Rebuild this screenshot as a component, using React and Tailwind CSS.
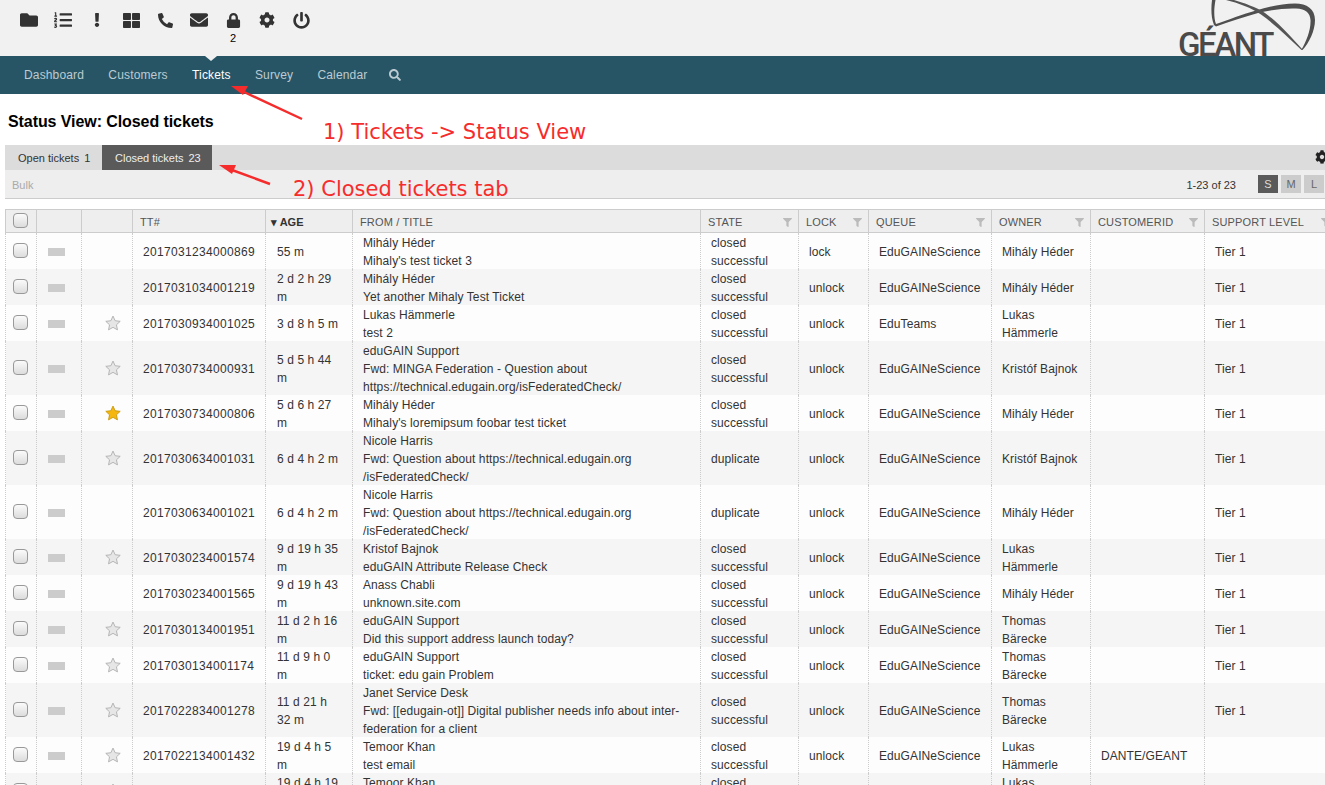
import React from "react";
import { FaFolder, FaListOl, FaExclamation, FaThLarge, FaPhoneAlt, FaEnvelope, FaLock, FaCog, FaPowerOff, FaSearch, FaFilter } from "react-icons/fa";

const topIcons = [
  [FaFolder, "text-[18px]"],
  [FaListOl, "text-[18px]"],
  [FaExclamation, "text-[14px]"],
  [FaThLarge, "text-[17px]"],
  [FaPhoneAlt, "text-[15px]"],
  [FaEnvelope, "text-[18px]"],
  [FaLock, "text-[15px]"],
  [FaCog, "text-[16px]"],
  [FaPowerOff, "text-[17px]"],
];

const cols = [31, 45, 51, 133, 87, 348, 98, 70, 123, 99, 114, 131];

const L = "Lukas\nHämmerle";
const T = "Thomas\nBärecke";
const CS = "closed\nsuccessful";
const rows = [
  { s: 0, id: "2017031234000869", age: "55 m", from: "Mihály Héder\nMihaly's test ticket 3", state: CS, lock: "lock", q: "EduGAINeScience", o: "Mihály Héder", c: "", t: "Tier 1" },
  { s: 0, id: "2017031034001219", age: "2 d 2 h 29\nm", from: "Mihály Héder\nYet another Mihaly Test Ticket", state: CS, lock: "unlock", q: "EduGAINeScience", o: "Mihály Héder", c: "", t: "Tier 1" },
  { s: 1, id: "2017030934001025", age: "3 d 8 h 5 m", from: "Lukas Hämmerle\ntest 2", state: CS, lock: "unlock", q: "EduTeams", o: L, c: "", t: "Tier 1" },
  { s: 1, id: "2017030734000931", age: "5 d 5 h 44\nm", from: "eduGAIN Support\nFwd: MINGA Federation - Question about\nhttps://technical.edugain.org/isFederatedCheck/", state: CS, lock: "unlock", q: "EduGAINeScience", o: "Kristóf Bajnok", c: "", t: "Tier 1" },
  { s: 2, id: "2017030734000806", age: "5 d 6 h 27\nm", from: "Mihály Héder\nMihaly's loremipsum foobar test ticket", state: CS, lock: "unlock", q: "EduGAINeScience", o: "Mihály Héder", c: "", t: "Tier 1" },
  { s: 1, id: "2017030634001031", age: "6 d 4 h 2 m", from: "Nicole Harris\nFwd: Question about https://technical.edugain.org\n/isFederatedCheck/", state: "duplicate", lock: "unlock", q: "EduGAINeScience", o: "Kristóf Bajnok", c: "", t: "Tier 1" },
  { s: 0, id: "2017030634001021", age: "6 d 4 h 2 m", from: "Nicole Harris\nFwd: Question about https://technical.edugain.org\n/isFederatedCheck/", state: "duplicate", lock: "unlock", q: "EduGAINeScience", o: "Mihály Héder", c: "", t: "Tier 1" },
  { s: 1, id: "2017030234001574", age: "9 d 19 h 35\nm", from: "Kristof Bajnok\neduGAIN Attribute Release Check", state: CS, lock: "unlock", q: "EduGAINeScience", o: L, c: "", t: "Tier 1" },
  { s: 0, id: "2017030234001565", age: "9 d 19 h 43\nm", from: "Anass Chabli\nunknown.site.com", state: CS, lock: "unlock", q: "EduGAINeScience", o: "Mihály Héder", c: "", t: "Tier 1" },
  { s: 1, id: "2017030134001951", age: "11 d 2 h 16\nm", from: "eduGAIN Support\nDid this support address launch today?", state: CS, lock: "unlock", q: "EduGAINeScience", o: T, c: "", t: "Tier 1" },
  { s: 1, id: "2017030134001174", age: "11 d 9 h 0\nm", from: "eduGAIN Support\nticket: edu gain Problem", state: CS, lock: "unlock", q: "EduGAINeScience", o: T, c: "", t: "Tier 1" },
  { s: 1, id: "2017022834001278", age: "11 d 21 h\n32 m", from: "Janet Service Desk\nFwd: [[edugain-ot]] Digital publisher needs info about inter-\nfederation for a client", state: CS, lock: "unlock", q: "EduGAINeScience", o: T, c: "", t: "Tier 1" },
  { s: 1, id: "2017022134001432", age: "19 d 4 h 5\nm", from: "Temoor Khan\ntest email", state: CS, lock: "unlock", q: "EduGAINeScience", o: L, c: "DANTE/GEANT", t: "" },
  { s: 1, id: "2017022134001421", age: "19 d 4 h 19\nm", from: "Temoor Khan\ntest email", state: CS, lock: "unlock", q: "EduGAINeScience", o: L, c: "DANTE/GEANT", t: "" },
];

const Lines = ({ text }) => (
  <div className="translate-y-px tracking-[0.09px]">
    {text.split("\n").map((l, i) => (
      <div key={i} className="whitespace-nowrap">{l}</div>
    ))}
  </div>
);

const Check = () => (
  <span className="block ml-[7px] -translate-y-px w-[15px] h-[15px] rounded-[4px] border border-[#999] bg-gradient-to-b from-[#fbfbfb] to-[#dcdcdc]" />
);

const Star = ({ on }) => (
  <svg width="16" height="16" viewBox="0 0 24 24" className="block">
    <path
      d="M12 1.6l3.2 7 7.6.9-5.6 5.2 1.5 7.6L12 18.5l-6.7 3.8 1.5-7.6L1.2 9.5l7.6-.9z"
      fill={on ? "#f4b60f" : "#e6e6e6"}
      stroke={on ? "#c99a10" : "#b0b0b0"}
      strokeWidth="1.4"
      strokeLinejoin="round"
    />
  </svg>
);

const th = "border-l border-[#ccc] h-[23px] p-0 font-normal text-left align-middle";
const Head = ({ children, filter }) => (
  <th className={th}>
    <div className="flex items-center justify-between pl-[7px] pr-[6px] text-[11px] text-[#555] tracking-[0.15px] translate-y-px">
      <span className="whitespace-nowrap">{children}</span>
      {filter && <FaFilter className="text-[9px] text-[#bbb]" />}
    </div>
  </th>
);

const td = "border-l border-dotted border-[#ccc] p-0 align-middle";

export default function App() {
  return (
    <div className="relative w-[1325px] h-[785px] overflow-hidden bg-white text-[12px] leading-[18px] text-[#333] font-['Liberation_Sans',Arial,sans-serif]">
      <header className="h-[56px] bg-[#f1f1f1] flex justify-between overflow-hidden">
        <div className="flex pl-[12px] pt-[11px]">
          {topIcons.map(([I, size], i) => (
            <div key={i} className="relative w-[34px] h-[18px] flex items-center justify-center text-[#333]">
              <I className={size} />
              {i === 6 && <span className="absolute top-[20px] left-0 right-0 text-center text-[11px] leading-[14px] text-black">2</span>}
            </div>
          ))}
        </div>
        <svg width="160" height="56" viewBox="1165 0 160 56" className="block shrink-0">
          <path d="M1212 0C1211 8 1211 18 1214 25L1216 26.5C1230 21.5 1245 16.5 1258 13C1270 10 1285 8 1296 8.5C1306 9 1310 13 1310.5 20C1311 30 1306 42 1301.5 49.5L1302.5 50C1309 43 1315 31 1315 20C1315 9 1307 3.5 1295 3.5C1282 3.5 1268 7 1256 10.5C1243 14 1228 20 1216 24C1213.5 17 1214 8 1215.5 0Z" fill="#4f4f4f" />
          <path d="M1226 0C1238 3 1252 8 1261 14.5C1275 24.5 1290 39 1301.5 50L1302.5 49.5C1292 38 1279 23 1265 13C1256 7 1244 3 1234 0Z" fill="#555555" />
          <text x="1178" y="56" fontFamily="Roboto, 'Liberation Sans', sans-serif" fontSize="33" fontWeight="500" letterSpacing="-2.4" fill="#4a4a4a">GÉANT</text>
        </svg>
      </header>

      <nav className="h-[38px] bg-[#285566] flex items-center pl-[24px] gap-[24.3px] text-[#bccbd1] tracking-[0.15px]">
        <span>Dashboard</span>
        <span>Customers</span>
        <span className="relative text-white">
          Tickets
          <span className="absolute top-[-10px] left-[13px] w-0 h-0 border-x-[6px] border-x-transparent border-t-[5px] border-t-[#f1f1f1]" />
        </span>
        <span>Survey</span>
        <span>Calendar</span>
        <FaSearch className="text-[12px] -ml-[3px]" />
      </nav>

      <h1 className="pt-[19px] ml-[8px] text-[16px] leading-[17px] font-bold text-black tracking-[-0.08px]">Status View: Closed tickets</h1>

      <div className="ml-[5px] mt-[15px] h-[25px] bg-[#dcdcdc] flex items-stretch text-[11px]">
        <div className="w-[97px] flex items-center pl-[13px] gap-[5px] text-[#333]"><span>Open tickets</span><span>1</span></div>
        <div className="w-[110px] flex items-center pl-[13px] gap-[5px] bg-[#5a5a5a] text-[#eee]"><span>Closed tickets</span><span>23</span></div>
        <div className="ml-auto flex items-center"><FaCog className="text-[14px] text-[#222] -mr-[4px] -translate-y-px" /></div>
      </div>

      <div className="ml-[5px] h-[29px] bg-[#eee] border-b border-[#ccc] flex items-center pl-[7px] text-[11px]">
        <span className="text-[#aaa] translate-y-px">Bulk</span>
        <span className="ml-auto text-[#333] translate-y-px">1-23 of 23</span>
        <div className="flex ml-[22px] gap-[3px] mr-[1px] text-[#666]">
          <span className="w-[20px] h-[18px] flex items-center justify-center bg-[#5a5a5a] text-[#ddd]">S</span>
          <span className="w-[20px] h-[18px] flex items-center justify-center bg-[#ccc]">M</span>
          <span className="w-[20px] h-[18px] flex items-center justify-center bg-[#ccc]">L</span>
        </div>
      </div>

      <table className="ml-[5px] mt-[10px] table-fixed border-collapse w-[1320px]">
        <colgroup>
          {cols.map((w, i) => <col key={i} span={1} width={w} />)}
        </colgroup>
        <thead>
          <tr className="bg-[#eee] border-y border-[#ccc]">
            <th className={th}><Check /></th>
            <th className={th}></th>
            <th className={th}></th>
            <Head>TT#</Head>
            <th className={th}><div className="pl-[5px] text-[11px] font-bold text-[#333] whitespace-nowrap translate-y-px">▾ AGE</div></th>
            <Head>FROM / TITLE</Head>
            <Head filter>STATE</Head>
            <Head filter>LOCK</Head>
            <Head filter>QUEUE</Head>
            <Head filter>OWNER</Head>
            <Head filter>CUSTOMERID</Head>
            <Head filter>SUPPORT LEVEL</Head>
          </tr>
        </thead>
        <tbody>
          {rows.map((r, i) => (
            <tr key={i} className={i % 2 ? "bg-[#f5f5f5]" : "bg-[#fdfdfd]"}>
              <td className={td + " border-l-[#ccc]"}><Check /></td>
              <td className={td}><span className="block ml-[11px] w-[17px] h-[8px] bg-[#ccc] translate-y-px" /></td>
              <td className={td}>{r.s > 0 && <div className="flex justify-end pr-[11px]"><Star on={r.s === 2} /></div>}</td>
              <td className={td + " pl-[10px]"}><div className="whitespace-nowrap tracking-[0.33px] translate-y-px">{r.id}</div></td>
              <td className={td + " pl-[11px]"}><Lines text={r.age} /></td>
              <td className={td + " pl-[10px]"}><Lines text={r.from} /></td>
              <td className={td + " pl-[10px]"}><Lines text={r.state} /></td>
              <td className={td + " pl-[10px]"}><Lines text={r.lock} /></td>
              <td className={td + " pl-[10px]"}><Lines text={r.q} /></td>
              <td className={td + " pl-[10px]"}><Lines text={r.o} /></td>
              <td className={td + " pl-[10px]"}><Lines text={r.c} /></td>
              <td className={td + " pl-[10px]"}><Lines text={r.t} /></td>
            </tr>
          ))}
        </tbody>
      </table>

      <span className="absolute left-[323px] top-[119px] text-[21px] leading-[26px] text-[#f62c2c] font-['DejaVu_Sans',sans-serif] whitespace-nowrap">1) Tickets -&gt; Status View</span>
      <span className="absolute left-[293px] top-[176px] text-[21px] leading-[26px] text-[#f62c2c] font-['DejaVu_Sans',sans-serif] whitespace-nowrap">2) Closed tickets tab</span>
      <svg width="320" height="200" viewBox="0 0 320 200" className="absolute left-0 top-0 pointer-events-none">
        <path d="M302 119L244 92" stroke="#f62c2c" strokeWidth="2.4" />
        <path d="M231 86L248 86L243 95Z" fill="#f62c2c" />
        <path d="M270 184L232 170" stroke="#f62c2c" strokeWidth="2.4" />
        <path d="M219 165L236 165L232 174Z" fill="#f62c2c" />
      </svg>
    </div>
  );
}
